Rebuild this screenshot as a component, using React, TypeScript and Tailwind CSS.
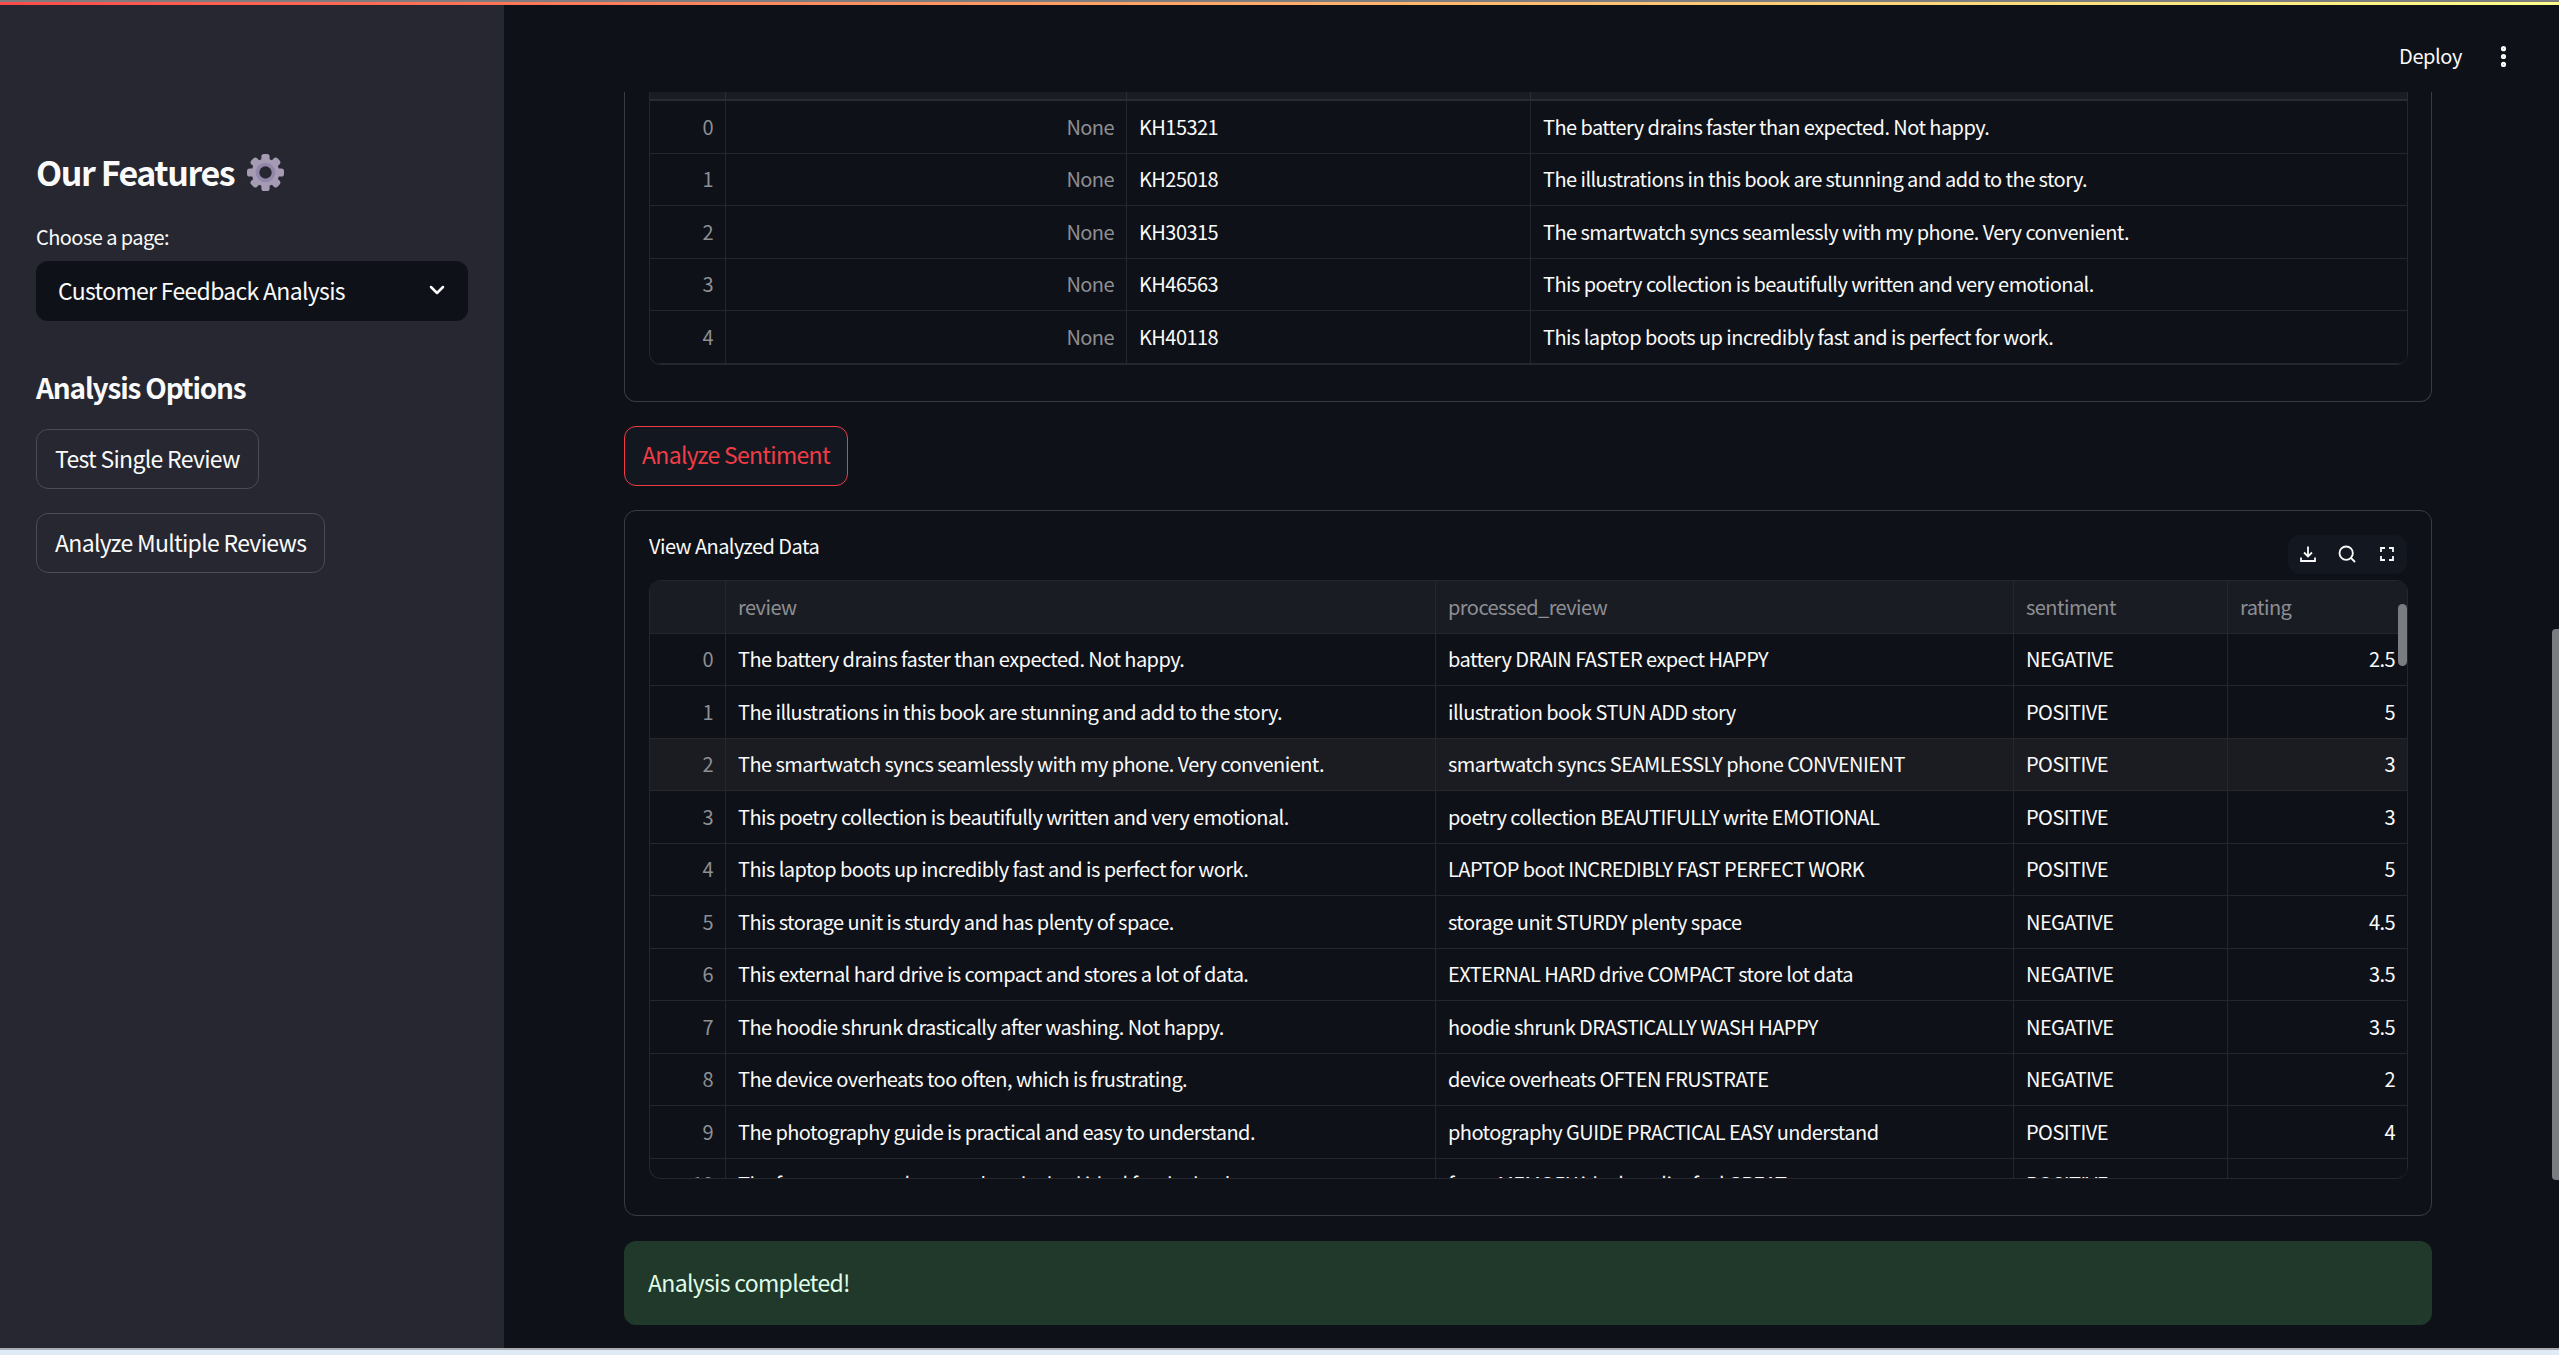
import React from 'react';
import { ChevronDown, EllipsisVertical, Search } from 'lucide-react';

const FONT = "font-['Noto_Sans_CJK_SC','Noto_Sans',sans-serif]";

const CUSTOMERS = [
  ['KH15321', 'The battery drains faster than expected. Not happy.'],
  ['KH25018', 'The illustrations in this book are stunning and add to the story.'],
  ['KH30315', 'The smartwatch syncs seamlessly with my phone. Very convenient.'],
  ['KH46563', 'This poetry collection is beautifully written and very emotional.'],
  ['KH40118', 'This laptop boots up incredibly fast and is perfect for work.'],
];

const ANALYZED = [
  ['The battery drains faster than expected. Not happy.', 'battery DRAIN FASTER expect HAPPY', 'NEGATIVE', '2.5'],
  ['The illustrations in this book are stunning and add to the story.', 'illustration book STUN ADD story', 'POSITIVE', '5'],
  ['The smartwatch syncs seamlessly with my phone. Very convenient.', 'smartwatch syncs SEAMLESSLY phone CONVENIENT', 'POSITIVE', '3'],
  ['This poetry collection is beautifully written and very emotional.', 'poetry collection BEAUTIFULLY write EMOTIONAL', 'POSITIVE', '3'],
  ['This laptop boots up incredibly fast and is perfect for work.', 'LAPTOP boot INCREDIBLY FAST PERFECT WORK', 'POSITIVE', '5'],
  ['This storage unit is sturdy and has plenty of space.', 'storage unit STURDY plenty space', 'NEGATIVE', '4.5'],
  ['This external hard drive is compact and stores a lot of data.', 'EXTERNAL HARD drive COMPACT store lot data', 'NEGATIVE', '3.5'],
  ['The hoodie shrunk drastically after washing. Not happy.', 'hoodie shrunk DRASTICALLY WASH HAPPY', 'NEGATIVE', '3.5'],
  ['The device overheats too often, which is frustrating.', 'device overheats OFTEN FRUSTRATE', 'NEGATIVE', '2'],
  ['The photography guide is practical and easy to understand.', 'photography GUIDE PRACTICAL EASY understand', 'POSITIVE', '4'],
  ['The foam memory layer makes the bed ideal for the back.', 'foam MEMORY ideal quality feel GREAT', 'POSITIVE', ''],
];

const cell = 'flex items-center px-3 border-r border-b border-[#26272d] whitespace-nowrap overflow-hidden';

const Gear: React.FC = () => (
  <svg width="37" height="37" viewBox="0 0 36 36" className="ml-[13px]">
    <g fill="#a59cb3">
      {[0, 45, 90, 135, 180, 225, 270, 315].map((a) => (
        <rect key={a} x="14" y="0" width="8" height="9" rx="2.5" transform={`rotate(${a} 18 18)`} />
      ))}
      <circle cx="18" cy="18" r="13.5" />
    </g>
    <circle cx="18" cy="18" r="9.5" fill="#9287aa" />
    <circle cx="18" cy="18" r="6" fill="#262730" />
  </svg>
);

const Sidebar: React.FC = () => (
  <aside className="w-[504px] shrink-0 bg-[#262730] pl-[36px] pt-[142px] text-[#fafafa]">
    <div className="flex items-center h-[50px]">
      <h2 className="text-[34px] tracking-[-0.042em] font-semibold leading-[50px]">Our Features</h2>
      <Gear />
    </div>
    <p className="mt-[25px] text-[20px] tracking-[-0.028em] leading-[30px]">Choose a page:</p>
    <div className="mt-[9px] w-[432px] h-[60px] pb-[2px] rounded-xl bg-[#0e1117] flex items-center justify-between pl-[22px] pr-[19px] text-[23px] tracking-[-0.03em]">
      <span>Customer Feedback Analysis</span>
      <ChevronDown size={24} strokeWidth={2.5} />
    </div>
    <h3 className="mt-[46px] text-[28px] tracking-[-0.042em] font-semibold leading-[40px]">Analysis Options</h3>
    <button className="block mt-[22px] h-[60px] pb-[2px] px-[18px] rounded-xl border border-[#4a4b55] bg-[#262730] text-[23px] tracking-[-0.03em]">Test Single Review</button>
    <button className="block mt-[24px] h-[60px] pb-[2px] px-[18px] rounded-xl border border-[#4a4b55] bg-[#262730] text-[23px] tracking-[-0.03em]">Analyze Multiple Reviews</button>
  </aside>
);

const CustomersTable: React.FC = () => (
  <div className="border-l border-b border-[#26272d] rounded-bl-xl rounded-br-xl overflow-hidden text-[20px] tracking-[-0.028em]">
    <div className="grid grid-cols-[76px_401px_404px_877px] h-[9px] bg-[#1a1c24]">
      {[0, 1, 2, 3].map((i) => (
        <div key={i} className="border-r border-b-2 border-[#2b2c33]" />
      ))}
    </div>
    {CUSTOMERS.map((row, i) => (
      <div key={row[0]} className="grid grid-cols-[76px_401px_404px_877px] h-[52.5px]">
        <div className={`${cell} justify-end text-[#8d8f93]`}>{i}</div>
        <div className={`${cell} justify-end text-[#8d8f93]`}>None</div>
        <div className={cell}>{row[0]}</div>
        <div className={cell}>{row[1]}</div>
      </div>
    ))}
  </div>
);

const AnalyzedTable: React.FC = () => (
  <div className="relative h-[599px] border-l border-t border-b border-[#26272d] rounded-xl overflow-hidden text-[20px] tracking-[-0.028em]">
    <div className="grid grid-cols-[76px_710px_578px_214px_180px] h-[53px] bg-[#1a1c24] text-[#8d8f93]">
      <div className={cell} />
      <div className={cell}>review</div>
      <div className={cell}>processed_review</div>
      <div className={cell}>sentiment</div>
      <div className={cell}>rating</div>
    </div>
    {ANALYZED.map((row, i) => (
      <div key={i} className={`grid grid-cols-[76px_710px_578px_214px_180px] h-[52.5px] ${i === 2 ? 'bg-[#1a1c22]' : ''}`}>
        <div className={`${cell} justify-end text-[#8d8f93]`}>{i}</div>
        <div className={cell}>{row[0]}</div>
        <div className={cell}>{row[1]}</div>
        <div className={cell}>{row[2]}</div>
        <div className={`${cell} justify-end`}>{row[3]}</div>
      </div>
    ))}
    <div className="absolute right-[1px] top-[23px] w-[9px] h-[62px] rounded-full bg-[#7b7c80]" />
  </div>
);

const Toolbar: React.FC = () => (
  <div className="grid grid-cols-3 place-items-center w-[119px] h-[39px] mr-[1px] rounded-xl bg-[#131720] text-[#fafafa]">
    <svg width="18" height="18" viewBox="0 0 18 18" fill="none" stroke="currentColor" strokeWidth="1.8">
      <path d="M9 1.5v9.5M5 7.5l4 4 4-4M2 12.5v3.5h14v-3.5" />
    </svg>
    <Search size={20} strokeWidth={2.2} />
    <svg width="18" height="18" viewBox="0 0 18 18" fill="none" stroke="currentColor" strokeWidth="1.8">
      <path d="M3 7V3h4M11 3h4v4M15 11v4h-4M7 15H3v-4" />
    </svg>
  </div>
);

const App: React.FC = () => {
  return (
    <div className={`relative w-full h-screen flex flex-col overflow-hidden bg-[#0e1117] text-[#fafafa] ${FONT}`}>
      <div className="h-[5px] shrink-0 bg-gradient-to-r from-[#ff4b4b] to-[#ffff8a] border-t-2 border-[#7d7d80]" />
      <div className="flex flex-1 min-h-0">
        <Sidebar />
        <main className="flex-1 min-w-0 flex flex-col">
          <header className="h-[87px] shrink-0 flex items-center justify-end pr-[42px] pt-[15px]">
            <span className="text-[20px] tracking-[-0.02em] mr-[28px]">Deploy</span>
            <EllipsisVertical size={27} strokeWidth={2.6} />
          </header>
          <div className="flex-1 min-h-0 pl-[120px] pr-[127px]">
            <section className="border-x border-b border-[#3b3c42] rounded-b-xl pl-[24px] pr-[23px] pb-[36px]">
              <CustomersTable />
            </section>
            <button className="block mt-[24px] w-[224px] h-[60px] pb-[2px] rounded-xl border border-[#ef3d46] bg-[#131720] text-[23px] tracking-[-0.03em] text-[#ef3d46]">
              Analyze Sentiment
            </button>
            <section className="mt-[24px] border border-[#3b3c42] rounded-xl pl-[24px] pr-[23px] pt-[24px] pb-[36px]">
              <div className="flex items-start justify-between h-[45px]">
                <h4 className="text-[20px] tracking-[-0.028em] leading-[30px] -mt-[4px]">View Analyzed Data</h4>
                <Toolbar />
              </div>
              <AnalyzedTable />
            </section>
            <div className="mt-[25px] h-[84px] rounded-xl bg-[#21392a] text-[#dffde9] text-[23px] tracking-[-0.03em] flex items-center pl-[24px]">
              Analysis completed!
            </div>
          </div>
        </main>
      </div>
      <div className="h-[7px] shrink-0 bg-[#dfeaf6] border-t-2 border-[#a9aeb5]" />
      <div className="absolute right-0 top-[629px] w-[7px] h-[551px] rounded-l bg-[#7b7c80]" />
    </div>
  );
};

export default App;
